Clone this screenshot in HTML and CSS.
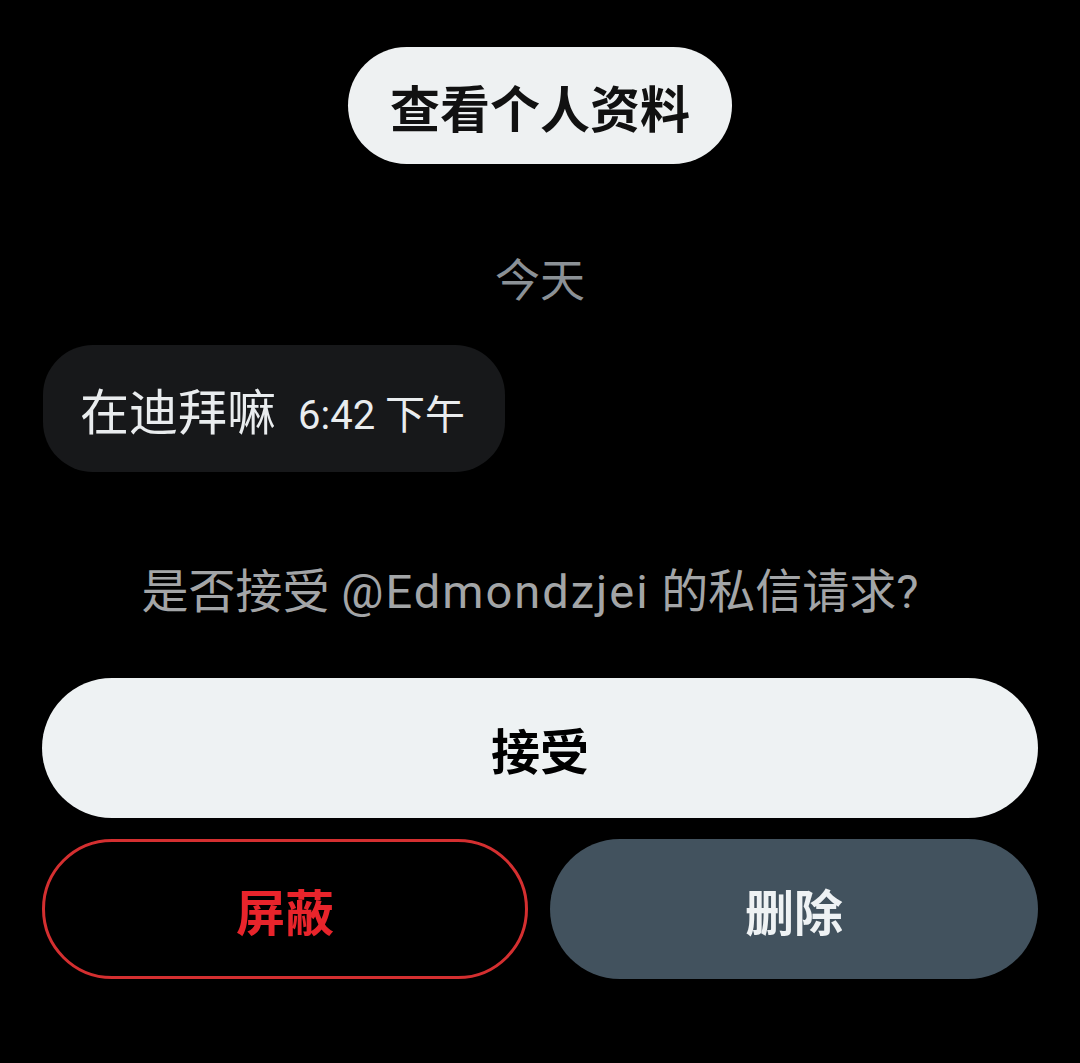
FILE: index.html
```html
<html>

<head>
    <meta charset="utf-8">
    <link rel="stylesheet" href="styles.css">
</head>

<body>
    <div class="chat">
        <div class="top">
            <button class="profile-btn">查看个人资料</button>
        </div>

        <div class="day">今天</div>

        <div class="msg-row">
            <div class="bubble">
                <span class="msg-text">在迪拜嘛</span>
                <span class="msg-time">6:42 下午</span>
            </div>
        </div>

        <div class="request">是否接受 <span class="handle">@Edmondzjei</span> 的私信请求?</div>

        <div class="actions">
            <button class="btn btn-accept">接受</button>
            <div class="btn-row">
                <button class="btn btn-block">屏蔽</button>
                <button class="btn btn-delete">删除</button>
            </div>
        </div>
    </div>
</body>

</html>
```

FILE: styles.css
```css
body{
    margin: 0;
    background: #000;
    font-family: Roboto, "Noto Sans CJK SC", sans-serif;
    width: 1080px;
    height: 1063px;
    overflow: hidden;
}

.chat{
    display: flex;
    flex-direction: column;
    padding: 47px 42px 0 42px;
}

.top{
    display: flex;
    justify-content: center;
}

.profile-btn{
    height: 117px;
    width: 384px;
    border: none;
    border-radius: 59px;
    background: #eef1f2;
    color: #111;
    font-family: inherit;
    font-size: 50px;
    font-weight: bold;
    padding: 0;
}

.day{
    margin-top: 90px;
    text-align: center;
    color: #8b9196;
    font-size: 45px;
    line-height: 56px;
}

.msg-row{
    display: flex;
    margin-top: 35px;
}

.bubble{
    display: flex;
    align-items: center;
    height: 127px;
    padding: 0 38px 0 37px;
    border-radius: 50px;
    background: #17181a;
    color: #e9ecee;
    box-sizing: border-box;
    width: 462px;
    margin-left: 1px;
}

.msg-text{
    font-size: 49px;
}

.msg-time{
    font-size: 40px;
    margin-left: 22px;
    padding-top: 6px;
}

.request{
    margin-top: 92px;
    text-align: center;
    color: #a3a5a7;
    font-size: 47px;
    line-height: 56px;
    padding-right: 20px;
}

.handle{
    letter-spacing: 2px;
}

.actions{
    display: flex;
    flex-direction: column;
    gap: 21px;
    margin-top: 58px;
}

.btn{
    height: 140px;
    border-radius: 70px;
    border: none;
    font-family: inherit;
    font-size: 49px;
    font-weight: bold;
    padding: 0;
}

.btn-accept{
    background: #eef2f3;
    color: #000;
}

.btn-row{
    display: flex;
    gap: 22px;
}

.btn-block{
    flex: 0 0 486px;
    background: transparent;
    border: 3px solid #d42f30;
    color: #e8242b;
}

.btn-delete{
    flex: 1;
    background: #42525e;
    color: #eef2f4;
}
```
